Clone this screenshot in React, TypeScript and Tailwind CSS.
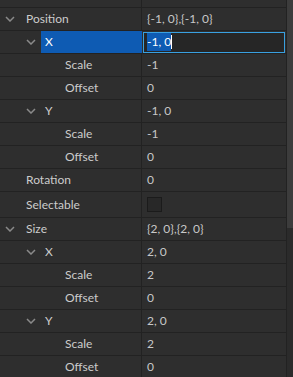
import React from "react";

type Row = {
  label: string;
  value?: string;
  level: number;
  chevron?: boolean;
  selected?: boolean;
  editing?: boolean;
  checkbox?: boolean;
  tall?: boolean;
};

const rows: Row[] = [
  { label: "Position", value: "{-1, 0},{-1, 0}", level: 0, chevron: true },
  { label: "X", value: "-1, 0", level: 1, chevron: true, selected: true, editing: true },
  { label: "Scale", value: "-1", level: 2 },
  { label: "Offset", value: "0", level: 2 },
  { label: "Y", value: "-1, 0", level: 1, chevron: true },
  { label: "Scale", value: "-1", level: 2 },
  { label: "Offset", value: "0", level: 2 },
  { label: "Rotation", value: "0", level: 0 },
  { label: "Selectable", level: 0, checkbox: true, tall: true },
  { label: "Size", value: "{2, 0},{2, 0}", level: 0, chevron: true },
  { label: "X", value: "2, 0", level: 1, chevron: true },
  { label: "Scale", value: "2", level: 2 },
  { label: "Offset", value: "0", level: 2 },
  { label: "Y", value: "2, 0", level: 1, chevron: true },
  { label: "Scale", value: "2", level: 2 },
  { label: "Offset", value: "0", level: 2 },
];

function Chevron() {
  return (
    <svg width="10" height="6" viewBox="0 0 10 6" className="shrink-0">
      <path d="M1 1 L5 5 L9 1" fill="none" stroke="#8a8a8a" strokeWidth="1.5" />
    </svg>
  );
}

function PropRow({ r }: { r: Row }) {
  const chevLeft = r.level === 0 ? "pl-[5px]" : "pl-[26px]";
  return (
    <div
      className={`flex border-b border-[#222222] ${r.tall ? "h-[26px]" : "h-[23px]"}`}
    >
      <div className="flex w-[142px] shrink-0 items-center border-r border-[#222222]">
        {r.level === 2 ? (
          <div className="pl-[65px] text-[#cccccc]">{r.label}</div>
        ) : r.chevron ? (
          <div className={`flex h-full items-center ${chevLeft}`}>
            <div className="flex w-[10px] items-center">
              <Chevron />
            </div>
            {r.selected ? (
              <div className="ml-[5px] flex h-full w-[101px] items-center bg-[#0e5bb3] pl-[4px] text-white">
                {r.label}
              </div>
            ) : (
              <div className={`${r.level === 0 ? "ml-[11px]" : "ml-[9px]"} text-[#cccccc]`}>
                {r.label}
              </div>
            )}
          </div>
        ) : (
          <div className="pl-[26px] text-[#cccccc]">{r.label}</div>
        )}
      </div>
      <div className="flex flex-1 items-center">
        {r.editing ? (
          <div className="mx-[1px] flex h-[21px] flex-1 items-center border border-[#39a0e0] bg-[#262626] pl-[3px]">
            <span className="bg-[#0e5bb3] text-white">{r.value}</span>
            <span className="h-[14px] w-px bg-white" />
          </div>
        ) : r.checkbox ? (
          <div className="ml-[5px] h-[15px] w-[15px] border border-[#1b1b1b] bg-[#282828]" />
        ) : (
          <div className="pl-[5px] text-[#c8c8c8]">{r.value}</div>
        )}
      </div>
    </div>
  );
}

export default function App() {
  return (
    <div
      className="flex h-[377px] w-[293px] overflow-hidden bg-[#2e2e2e] text-[12px]"
      style={{ fontFamily: "Lato, 'Open Sans', sans-serif" }}
    >
      <div className="flex min-w-0 flex-1 flex-col">
        <div className="mt-[-15px]">
          <div className="flex h-[23px] border-b border-[#222222]">
            <div className="flex w-[142px] shrink-0 items-center border-r border-[#222222] pl-[26px] text-[#cccccc]">
              Parent
            </div>
            <div className="flex flex-1 items-center pl-[5px] text-[#c8c8c8]">ScreenGui</div>
          </div>
          {rows.map((r, i) => (
            <PropRow key={i} r={r} />
          ))}
        </div>
      </div>
      <div className="flex w-[7px] shrink-0 flex-col border-l border-[#222222]">
        <div className="h-[228px] bg-[#3c3c3c]" />
        <div className="flex-1 bg-[#2b2b2b]" />
      </div>
    </div>
  );
}
